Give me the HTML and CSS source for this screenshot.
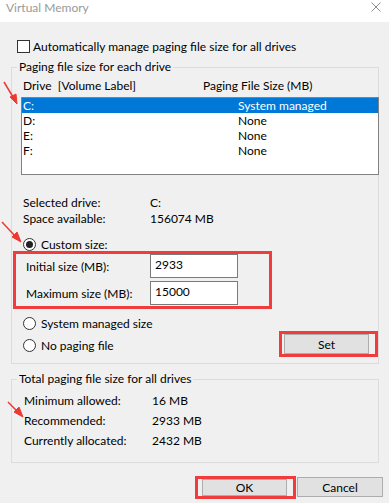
FILE: index.html
```html
<!DOCTYPE html>
<html lang="en">
<head>
    <meta charset="UTF-8">
    <meta name="viewport" content="width=device-width, initial-scale=1.0">
    <title>Virtual Memory</title>
    <link rel="stylesheet" href="styles.css">
</head>
<body>
    <div class="titlebar">
        <span class="title">Virtual Memory</span>
        <svg class="close" width="10" height="10" viewBox="0 0 10 10">
            <path d="M0.5 0.5 L9.5 9.5 M9.5 0.5 L0.5 9.5" stroke="#8a8a8a" stroke-width="1" fill="none"/>
        </svg>
    </div>

    <div class="dialog">
        <label class="check-row">
            <span class="checkbox"></span>
            <span>Automatically manage paging file size for all drives</span>
        </label>

        <fieldset class="group drives">
            <legend>Paging file size for each drive</legend>
            <div class="cols">
                <span class="col-drive">Drive&nbsp;&nbsp;[Volume Label]</span>
                <span>Paging File Size (MB)</span>
            </div>
            <div class="listbox">
                <div class="item selected"><span class="col-drive">C:</span><span>System managed</span></div>
                <div class="item"><span class="col-drive">D:</span><span>None</span></div>
                <div class="item"><span class="col-drive">E:</span><span>None</span></div>
                <div class="item"><span class="col-drive">F:</span><span>None</span></div>
            </div>

            <div class="info">
                <div class="info-row"><span class="info-label">Selected drive:</span><span>C:</span></div>
                <div class="info-row"><span class="info-label">Space available:</span><span>156074 MB</span></div>
            </div>

            <label class="radio-row custom">
                <span class="radio checked"></span>
                <span>Custom size:</span>
            </label>

            <div class="size-box">
                <div class="size-row">
                    <span class="size-label">Initial size (MB):</span>
                    <div class="input">2933</div>
                </div>
                <div class="size-row">
                    <span class="size-label">Maximum size (MB):</span>
                    <div class="input">15000</div>
                </div>
            </div>

            <div class="options">
                <div class="option-list">
                    <label class="radio-row">
                        <span class="radio"></span>
                        <span>System managed size</span>
                    </label>
                    <label class="radio-row">
                        <span class="radio"></span>
                        <span>No paging file</span>
                    </label>
                </div>
                <div class="mark set-mark">
                    <button class="btn set-btn">Set</button>
                </div>
            </div>
        </fieldset>

        <fieldset class="group totals">
            <legend>Total paging file size for all drives</legend>
            <div class="total-row"><span class="total-label">Minimum allowed:</span><span>16 MB</span></div>
            <div class="total-row"><span class="total-label">Recommended:</span><span>2933 MB</span></div>
            <div class="total-row"><span class="total-label">Currently allocated:</span><span>2432 MB</span></div>
        </fieldset>

        <div class="buttons">
            <div class="mark ok-mark">
                <button class="btn ok-btn">OK</button>
            </div>
            <button class="btn cancel-btn">Cancel</button>
        </div>
    </div>

    <!-- annotation arrows drawn over the screenshot -->
    <svg class="arrows" width="389" height="503" viewBox="0 0 389 503">
        <g stroke="#ec3a32" stroke-width="1.5" fill="#ec3a32">
            <line x1="4" y1="82" x2="13" y2="97"/>
            <polygon points="17,104 10,97 16,94" stroke-width="1"/>
            <line x1="2" y1="222" x2="15" y2="236"/>
            <polygon points="21,242 12,237 17,232" stroke-width="1"/>
            <line x1="8" y1="402" x2="17" y2="411"/>
            <polygon points="23,417 14,412 19,407" stroke-width="1"/>
        </g>
    </svg>
</body>
</html>
```

FILE: styles.css
```css
body {
    font-family: Lato, "Liberation Sans", Arial, sans-serif;
    font-size: 12px;
    color: #000000;
    background-color: #f0f0f0;
    margin: 0;
    padding: 0;
    width: 389px;
    height: 503px;
    overflow: hidden;
    position: relative;
}
.titlebar {
    height: 22px;
    background-color: #ffffff;
    display: flex;
    justify-content: space-between;
    align-items: flex-start;
    padding: 0 8px 0 6px;
}
.titlebar .title {
    color: #999999;
    line-height: 16px;
    font-size: 12px;
}
.titlebar .close {
    margin-top: 2px;
}
.dialog {
    padding: 0 0 0 11px;
}
.check-row {
    display: flex;
    align-items: center;
    height: 14px;
    margin-top: 17px;
    padding-left: 6px;
}
.checkbox {
    width: 11px;
    height: 11px;
    border: 1px solid #333333;
    background-color: #ffffff;
    margin-right: 3px;
}
.group {
    margin: 0;
    border: 1px solid #dcdcdc;
    width: 368px;
    box-sizing: border-box;
    min-width: 0;
}
.group legend {
    padding: 0 2px;
    line-height: 16px;
}
.drives {
    margin-top: 6px;
    padding: 4px 0 6px 9px;
}
.drives legend {
    margin-left: -4px;
}
.cols {
    display: flex;
    height: 14px;
    line-height: 14px;
    padding-left: 2px;
}
.col-drive {
    width: 180px;
}
.listbox {
    margin-top: 4px;
    margin-right: -1px;
    height: 76px;
    border: 1px solid #828282;
    background-color: #ffffff;
}
.item {
    display: flex;
    height: 15px;
    line-height: 16px;
    padding-left: 1px;
}
.item .col-drive {
    width: 215px;
}
.item.selected {
    background-color: #0078d7;
    color: #ffffff;
}
.info {
    margin-top: 20px;
    padding-left: 2px;
}
.info-row {
    display: flex;
    height: 16px;
    line-height: 16px;
}
.info-label {
    width: 127px;
}
.radio-row {
    display: flex;
    align-items: center;
    height: 14px;
    padding-left: 2px;
}
.radio-row.custom {
    margin-top: 10px;
}
.radio {
    width: 11px;
    height: 11px;
    border: 1px solid #333333;
    border-radius: 50%;
    background-color: #ffffff;
    margin-right: 5px;
    display: flex;
    align-items: center;
    justify-content: center;
}
.radio.checked::after {
    content: "";
    width: 7px;
    height: 7px;
    border-radius: 50%;
    background-color: #222222;
}
.size-box {
    margin-left: -8px;
    width: 243px;
    border: 3px solid #f03c3c;
    padding: 0 0 1px 10px;
    display: flex;
    flex-direction: column;
    gap: 3px;
}
.size-row {
    display: flex;
    align-items: center;
    height: 24px;
}
.size-label {
    width: 124px;
}
.input {
    width: 86px;
    height: 22px;
    border: 1px solid #7a7a7a;
    background-color: #ffffff;
    line-height: 20px;
    padding-left: 4px;
    box-sizing: content-box;
    width: 82px;
}
.options {
    display: flex;
    justify-content: space-between;
    align-items: flex-start;
    margin-top: 7px;
}
.option-list {
    display: flex;
    flex-direction: column;
    gap: 8px;
}
.mark {
    border: 3px solid #f03c3c;
    display: flex;
}
.set-mark {
    margin-top: 15px;
    padding: 0 6px 0 2px;
}
.btn {
    font-family: inherit;
    font-size: 12px;
    color: #000000;
    background-color: #e1e1e1;
    border: 1px solid #adadad;
    padding: 0;
    margin: 0;
}
.set-btn {
    width: 85px;
    height: 20px;
}
.totals {
    margin-top: 7px;
    padding: 4px 0 11px 12px;
}
.totals legend {
    margin-left: -7px;
}
.total-row {
    display: flex;
    height: 20px;
    line-height: 20px;
}
.total-label {
    width: 128px;
}
.buttons {
    display: flex;
    justify-content: flex-end;
    align-items: flex-start;
    margin-top: 13px;
    padding-right: 6px;
}
.ok-mark {
    padding: 0 6px 0 4px;
    margin-right: 1px;
}
.ok-btn {
    width: 85px;
    height: 17px;
}
.cancel-btn {
    width: 86px;
    height: 20px;
    margin-top: 1px;
}
.arrows {
    position: absolute;
    left: 0;
    top: 0;
    pointer-events: none;
}
```
